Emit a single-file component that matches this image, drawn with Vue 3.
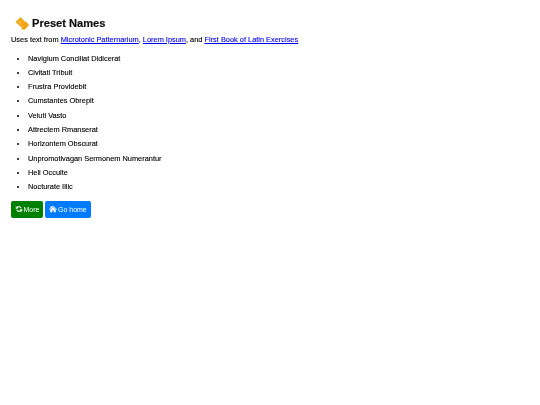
<template>
  <div class="page">
    <h1 class="title">
      <svg class="tags" viewBox="0 0 14 13" width="14" height="13" aria-hidden="true">
        <path d="M5.5 0 L11 5.5 L6.5 10.5 L0.5 5 Z" fill="#f5a81c" />
        <path d="M11 4.5 L14 8 L10 12.5 L6.5 12.5 L6.5 11 Z" fill="#f0a010" />
        <circle cx="5" cy="5" r="0.8" fill="#fbd98a" />
      </svg>
      <span>Preset Names</span>
    </h1>
    <p class="intro">
      Uses text from <a href="#">Microtonic Patternarium</a>, <a href="#">Lorem Ipsum</a>, and <a href="#">First Book of Latin Exercises</a>
    </p>
    <ul class="names">
      <li v-for="name in names" :key="name">{{ name }}</li>
    </ul>
    <div class="actions">
      <button class="btn btn-green" type="button">
        <svg viewBox="0 0 16 16" width="8" height="8" aria-hidden="true">
          <path d="M13.5 6.5A6 6 0 0 0 3.2 4.2L1.5 2.5V7.5H6.5L4.8 5.8A3.8 3.8 0 0 1 11.2 6.5ZM2.5 9.5A6 6 0 0 0 12.8 11.8L14.5 13.5V8.5H9.5L11.2 10.2A3.8 3.8 0 0 1 4.8 9.5Z" fill="#fff" />
        </svg>
        More
      </button>
      <button class="btn btn-blue" type="button">
        <svg viewBox="0 0 16 16" width="8" height="8" aria-hidden="true">
          <path d="M8 1.5 L16 8.5 L14.8 9.6 L8 3.8 L1.2 9.6 L0 8.5 L3 5.9 V2.5 H5 V4.2 Z M8 5 L13.5 9.7 V14.5 H9.5 V10.5 H6.5 V14.5 H2.5 V9.7 Z" fill="#fff" />
        </svg>
        Go home
      </button>
    </div>
  </div>
</template>

<script setup>
const names = [
  'Navigium Conciliat Didicerat',
  'Civitati Tribuit',
  'Frustra Providebit',
  'Cumstantes Obrepit',
  'Veluti Vasto',
  'Attrectem Rmanserat',
  'Horizontem Obscurat',
  'Unpromotivagan Sermonem Numerantur',
  'Heli Occulte',
  'Nocturate Illic',
];
</script>

<style scoped>
.page { padding: 13px 11px 0; font-family: "Liberation Sans", Arial, sans-serif; font-size: 7.4px; color: #000; will-change: transform; -webkit-text-stroke: 0.12px currentColor; }
.title { display: flex; align-items: center; gap: 3px; margin: 0 0 1px 4px; font-size: 11.1px; line-height: 20px; font-weight: 700; color: #111; -webkit-text-stroke: 0.2px currentColor; }
.tags { flex: none; }
.intro { margin: 0 0 5.5px; line-height: 12px; }
.intro a { color: #00e; text-decoration: underline; }
.names { margin: 0 0 6.5px; padding: 0 0 0 17px; }
.names li { line-height: 14.33px; }
.actions { display: flex; gap: 2px; }
.btn { display: flex; align-items: center; gap: 1px; height: 17px; padding: 0 4px; border: 0; border-radius: 2px; color: #fff; font: 7px "Liberation Sans", Arial, sans-serif; -webkit-text-stroke: 0; }
.btn svg { margin-top: -1px; }
.btn-green { background: #008000; padding: 0 3.5px; }
.btn-blue { background: #007bff; }
</style>
